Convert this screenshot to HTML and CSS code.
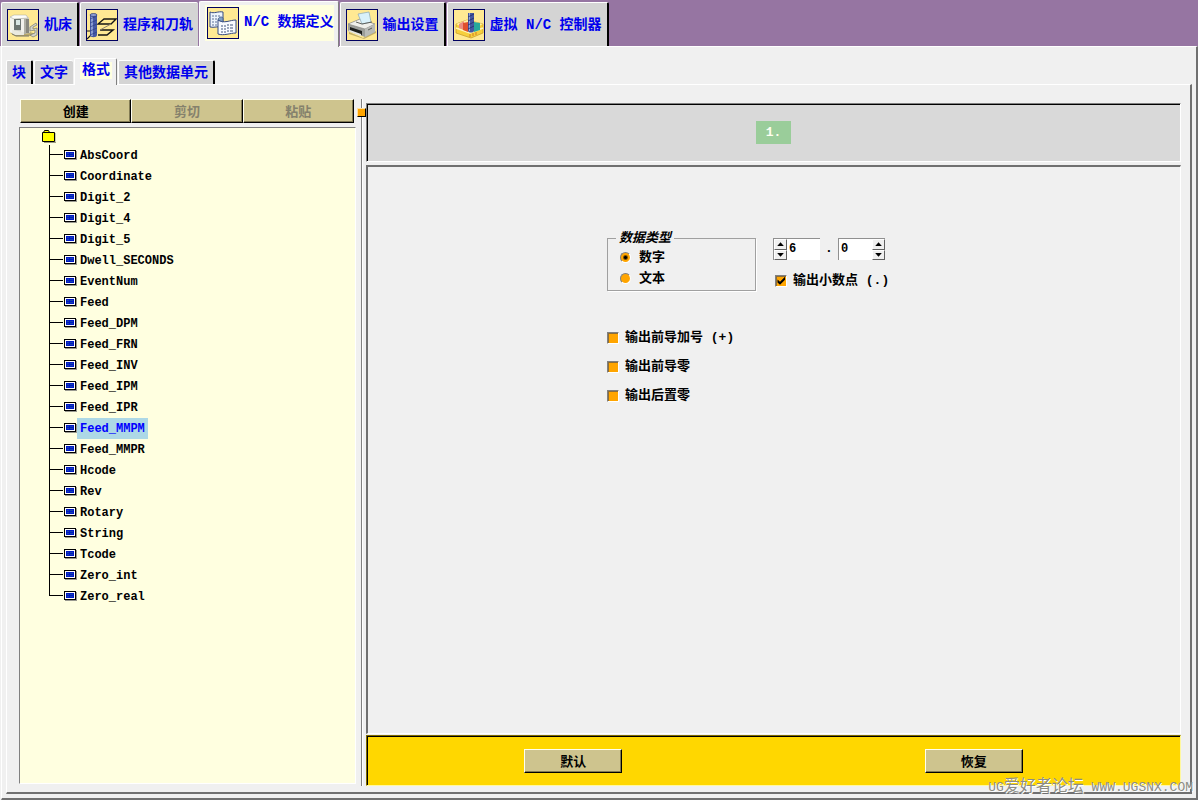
FILE: index.html
```html
<!DOCTYPE html>
<html lang="zh-CN">
<head>
<meta charset="utf-8">
<title>N/C 数据定义</title>
<link rel="stylesheet" href="styles.css">
</head>
<body>
<div class="app">
  <nav class="tabs main-tabs" role="tablist">
    <button class="tab" role="tab">
      <svg class="tab-icon" viewBox="0 0 30 30" aria-hidden="true">
        <path d="M2 23l6 3h14l6-2-6-2z" fill="#b9a96c"/>
        <path d="M2 7l4-2h12l3 3 1 15-15 2-5-3z" fill="#cfcfc6"/>
        <path d="M2 7l4 2v15l-4-2z" fill="#f4f4ee"/>
        <path d="M2 7l4-2h12l2 3-14 1z" fill="#fdfdf8" stroke="#a5a598" stroke-width=".5"/>
        <path d="M6 9h7v11H6z" fill="#6d7572"/>
        <path d="M8 10h4v5H8z" fill="#d9e6e4"/>
        <path d="M13 9h3v15h-3z" fill="#f2f2ec"/>
        <path d="M16 9h2v15h-2z" fill="#b0b0a6"/>
        <path d="M18 9h3v14h-3z" fill="#88887e"/>
        <path d="M4 20l12 2v3H7l-3-2z" fill="#e9e9e0"/>
        <path d="M28 13l-6 4v4l5-1v3l-5 2 3 2 4-2v-7l-4 1v-2l4-2z" fill="#d4d4cc" stroke="#77776c" stroke-width=".7"/>
        <path d="M4 24l4 2h13" fill="none" stroke="#77776c"/>
      </svg>
      <span>机床</span>
    </button>
    <button class="tab before-active" role="tab">
      <svg class="tab-icon" viewBox="0 0 30 30" aria-hidden="true">
        <path d="M0 21h4M5 24l-5 5" stroke="#151515" stroke-width="1.200"/>
        <path d="M17 9h12l-5 5H11z" fill="none" stroke="#151515" stroke-width="1.300"/>
        <path d="M13 20h13l-6 5h-9" fill="none" stroke="#151515" stroke-width="1.500"/>
        <path d="M24 14l-11 6" stroke="#8b8170"/>
        <path d="M3 5v20c0 3 7 3 7 0V5z" fill="#4659a5"/>
        <path d="M5 6v20" stroke="#a3b5e2" stroke-width="1.500"/>
        <path d="M3 9l7-3M3 13l7-3M3 17l7-3M3 21l7-3M3 25l7-3" stroke="#2c3e82" stroke-width=".7"/>
        <ellipse cx="6.500" cy="5" rx="3.500" ry="1.500" fill="#8e9fd6" stroke="#20306f" stroke-width=".7"/>
      </svg>
      <span>程序和刀轨</span>
    </button>
    <button class="tab active" role="tab" aria-selected="true">
      <span class="tab-face">
        <svg class="tab-icon" viewBox="0 0 30 30" aria-hidden="true">
          <path d="M2 4c4 2 8-1 13 0v15c-5-1-9 1-13 0z" fill="#edf4fc" stroke="#354a80"/>
          <path d="M4 8h2m1 0h2m1 0h2M4 11h2m1 0h2M4 14h2m1 0h2M4 17h2m1 0h2" stroke="#5c7098"/>
          <path d="M10 12c6 4 12 0 18 0v13c-6 0-12 3-18 1z" fill="#f8fbff" stroke="#354a80"/>
          <path d="M13 18h2m1 0h2m1-1h2m1 0h3M13 21h2m1 0h2m1-1h2m1 0h3M13 24h2m1 0h2m1-1h2m1 0h3" stroke="#40557c"/>
          <path d="M10 12c0-3 4-4 5-2v4z" fill="#7f9fc4" stroke="#354a80" stroke-width=".7"/>
        </svg>
        <span>N/C 数据定义</span>
      </span>
    </button>
    <button class="tab" role="tab">
      <svg class="tab-icon" viewBox="0 0 30 30" aria-hidden="true">
        <path d="M2 22l14 6 13-7v2l-12 6-15-5z" fill="#c3af68"/>
        <path d="M1 14l12-5 15 5v8l-10 5-17-6z" fill="#9b9d99"/>
        <path d="M1 14l12-5 15 5-10 5z" fill="#efefea" stroke="#7d7d78" stroke-width=".6"/>
        <path d="M11 4l11-2 2 10-9 2z" fill="#d9f1fa" stroke="#8aa7b4" stroke-width=".7"/>
        <path d="M9 12l6 2 10-2" fill="none" stroke="#60635f"/>
        <path d="M3 17l12 4v4L3 21z" fill="#1b1d1c"/>
        <path d="M3 20l11 4v2L1 21z" fill="#e6e7e2"/>
        <path d="M18 19v8l10-5v-8z" fill="#b9bbb7"/>
        <path d="M21 20l4-2" stroke="#5a5c59"/>
      </svg>
      <span>输出设置</span>
    </button>
    <button class="tab" role="tab">
      <svg class="tab-icon" viewBox="0 0 30 30" aria-hidden="true">
        <path d="M2 14l11-4 16 4v9l-12 5-15-5z" fill="#f6cf3c" stroke="#c39824" stroke-width=".7"/>
        <path d="M2 14l11-4 16 4-13 7z" fill="#fff0a0"/>
        <path d="M2 18l14 5 13-5" fill="none" stroke="#fff6bd" stroke-width="1.500"/>
        <path d="M5 14l5-3v9l-5-2z" fill="#eb8d7f"/>
        <path d="M9 13l5-1v10l-5-2z" fill="#e0502c"/>
        <path d="M20 12l6 1v7l-6 2z" fill="#27a99b"/>
        <path d="M14 3h6v18c-1 2-5 2-6 0z" fill="#4556a0"/>
        <path d="M15.500 3v18" stroke="#95a6db"/>
        <path d="M14 7l6-3M14 11l6-3M14 15l6-3M14 19l6-3" stroke="#1e2b6b" stroke-width=".8"/>
        <path d="M16 24v3m3-4v3m3-4v3" stroke="#d37d23"/>
      </svg>
      <span>虚拟 N/C 控制器</span>
    </button>
  </nav>

  <div class="sheet">
    <nav class="tabs sub-tabs" role="tablist">
      <button class="tab" role="tab">块</button>
      <button class="tab before-active" role="tab">文字</button>
      <button class="tab active" role="tab" aria-selected="true"><span class="tab-face">格式</span></button>
      <button class="tab" role="tab">其他数据单元</button>
    </nav>

    <main class="page">
      <section class="browser">
        <div class="toolbar">
          <button class="btn">创建</button>
          <button class="btn" disabled>剪切</button>
          <button class="btn" disabled>粘贴</button>
        </div>
        <div class="tree">
          <svg class="folder" viewBox="0 0 14 13" aria-hidden="true">
            <path d="M2 12.500h12V3" fill="none" stroke="#999980"/>
            <path d="M.5 2.500h1l1-2h4l1 2h5v9H.5z" fill="#ffff00" stroke="#000"/>
            <path d="M1 2.500h11" stroke="#000"/>
          </svg>
          <ul class="nodes">
            <li><svg class="node-icon"><use href="#node"/></svg><span>AbsCoord</span></li>
            <li><svg class="node-icon"><use href="#node"/></svg><span>Coordinate</span></li>
            <li><svg class="node-icon"><use href="#node"/></svg><span>Digit_2</span></li>
            <li><svg class="node-icon"><use href="#node"/></svg><span>Digit_4</span></li>
            <li><svg class="node-icon"><use href="#node"/></svg><span>Digit_5</span></li>
            <li><svg class="node-icon"><use href="#node"/></svg><span>Dwell_SECONDS</span></li>
            <li><svg class="node-icon"><use href="#node"/></svg><span>EventNum</span></li>
            <li><svg class="node-icon"><use href="#node"/></svg><span>Feed</span></li>
            <li><svg class="node-icon"><use href="#node"/></svg><span>Feed_DPM</span></li>
            <li><svg class="node-icon"><use href="#node"/></svg><span>Feed_FRN</span></li>
            <li><svg class="node-icon"><use href="#node"/></svg><span>Feed_INV</span></li>
            <li><svg class="node-icon"><use href="#node"/></svg><span>Feed_IPM</span></li>
            <li><svg class="node-icon"><use href="#node"/></svg><span>Feed_IPR</span></li>
            <li class="selected"><svg class="node-icon"><use href="#node"/></svg><span>Feed_MMPM</span></li>
            <li><svg class="node-icon"><use href="#node"/></svg><span>Feed_MMPR</span></li>
            <li><svg class="node-icon"><use href="#node"/></svg><span>Hcode</span></li>
            <li><svg class="node-icon"><use href="#node"/></svg><span>Rev</span></li>
            <li><svg class="node-icon"><use href="#node"/></svg><span>Rotary</span></li>
            <li><svg class="node-icon"><use href="#node"/></svg><span>String</span></li>
            <li><svg class="node-icon"><use href="#node"/></svg><span>Tcode</span></li>
            <li><svg class="node-icon"><use href="#node"/></svg><span>Zero_int</span></li>
            <li><svg class="node-icon"><use href="#node"/></svg><span>Zero_real</span></li>
          </ul>
        </div>
      </section>

      <div class="splitter"><span class="sash"></span></div>

      <section class="detail">
        <header class="preview"><output class="sample">1.</output></header>

        <form class="editor">
          <div class="form">
            <div class="form-top">
              <fieldset class="types">
                <legend>数据类型</legend>
                <label class="option"><input type="radio" name="type" checked>数字</label>
                <label class="option"><input type="radio" name="type">文本</label>
              </fieldset>
              <div class="digits">
                <div class="spin-row">
                  <div class="spin">
                    <div class="arrows">
                      <button type="button" class="up" aria-label="增加整数位"></button>
                      <button type="button" class="down" aria-label="减少整数位"></button>
                    </div>
                    <input type="text" value="6" aria-label="整数位">
                  </div>
                  <span class="point">.</span>
                  <div class="spin">
                    <input type="text" value="0" aria-label="小数位">
                    <div class="arrows">
                      <button type="button" class="up" aria-label="增加小数位"></button>
                      <button type="button" class="down" aria-label="减少小数位"></button>
                    </div>
                  </div>
                </div>
                <label class="check"><input type="checkbox" checked>输出小数点 (.)</label>
              </div>
            </div>
            <div class="flags">
              <label class="check"><input type="checkbox">输出前导加号 (+)</label>
              <label class="check"><input type="checkbox">输出前导零</label>
              <label class="check"><input type="checkbox">输出后置零</label>
            </div>
          </div>
        </form>

        <footer class="actions">
          <button class="btn">默认</button>
          <button class="btn">恢复</button>
        </footer>
      </section>
    </main>
  </div>
  <div class="watermark"><span class="latin">UG</span>爱好者论坛<span class="latin"> WWW.UGSNX.COM</span></div>
</div>

<svg class="defs" aria-hidden="true">
  <symbol id="node" viewBox="0 0 13 11">
    <g shape-rendering="crispEdges">
      <path d="M1 1h12v9H1z" fill="#999990"/>
      <path d="M0 0h12v9H0z" fill="#000"/>
      <path d="M1 1h10v7H1z" fill="#fff"/>
      <path d="M2 2h8v5H2z" fill="#0018c8"/>
      <path d="M3 3h2v1H3zm3 0h3v1H6zM3 5h2v1H3zm3 0h3v1H6z" fill="#1848a8"/>
    </g>
  </symbol>
</svg>
</body>
</html>
```

FILE: styles.css
```css
* { box-sizing: border-box; }

body {
  margin: 0;
  font: bold 13px/21px "Liberation Mono", "Noto Sans CJK SC", monospace;
  color: #000;
  background: #f0f0f0;
}

button, input, fieldset {
  font: inherit;
  color: inherit;
  margin: 0;
  padding: 0;
}

.defs { display: none; }

.app {
  position: relative;
  display: flex;
  flex-direction: column;
  min-height: 100vh;
}

/* Tabs */
.tabs {
  display: flex;
  align-items: flex-end;
  gap: 1px;
}

.tab {
  display: flex;
  align-items: center;
  gap: 5px;
  padding: 1px 5px 0;
  font-size: 14px;
  color: #0000ee;
  background: #d4d4d4;
  border: 1px solid #fff;
  border-right: 2px solid #000;
  border-bottom: 0;
  border-radius: 2px 2px 0 0;
  white-space: nowrap;
}

.tab.before-active {
  border-right: 0;
}

.tab.active {
  background: #f0f0f0;
  border-right: 1px solid #808080;
}

.tab-face {
  display: flex;
  align-items: center;
  gap: 5px;
  background: #ffffe0;
}

.tab-icon {
  width: 32px;
  height: 32px;
  border: 1px solid #000060;
  background: #ffe993;
}

.main-tabs {
  padding: 1px 0 0 1px;
  background: #9675a2;
}
.main-tabs .tab { height: 44px; }
.main-tabs .tab.active {
  height: 46px;
  padding: 0 4px 4px 5px;
  margin-bottom: -1px;
  position: relative;
}
.main-tabs .tab-face { padding: 2px 0 2px 2px; }

.sub-tabs .tab { height: 24px; }
.sub-tabs .tab.active {
  height: 27px;
  padding: 0 4px 4px 5px;
  margin-bottom: -1px;
  position: relative;
}
.sub-tabs .tab-face { padding: 0 2px; line-height: 17px; }

/* Frames */
.sheet, .page {
  flex: 1;
  display: flex;
  border: 1px solid #fff;
  border-right: 2px solid #707070;
  border-bottom: 2px solid #707070;
}

.sheet {
  flex-direction: column;
  margin-left: 1px;
  padding: 11px 4px 4px 4px;
  background: #f0f0f0;
}

.page { padding: 14px 9px 6px 12px; }

/* Left column */
.browser {
  flex: 0 0 337px;
  display: flex;
  flex-direction: column;
  gap: 4px;
  padding-bottom: 2px;
}

.btn {
  height: 24px;
  padding-top: 2px;
  background: #cec48e;
  border: 1px solid #fffff0;
  border-right-color: #000;
  border-bottom-color: #000;
  box-shadow: inset -1px -1px 0 #827b54;
}

.btn:disabled { color: #85816c; }

.toolbar {
  display: grid;
  grid-template-columns: repeat(3, 1fr);
  padding: 0 2px 0 1px;
}

.tree {
  flex: 1;
  background: #ffffe0;
  border: 1px solid #fff;
  border-top-color: #808080;
  border-left-color: #808080;
  padding-top: 2px;
}

.folder {
  display: block;
  width: 14px;
  height: 13px;
  margin: 0 0 2px 22px;
}

.nodes {
  list-style: none;
  margin: 0 0 0 29px;
  padding: 0;
  font-size: 12px;
}

.nodes li {
  display: flex;
  align-items: center;
  height: 21px;
  padding-left: 15px;
  background:
    linear-gradient(#000, #000) 0 0 / 1px 100% no-repeat,
    linear-gradient(#000, #000) 0 9px / 14px 1px no-repeat;
}

.nodes li:last-child {
  background-size: 1px 10px, 14px 1px;
}

.nodes span {
  padding: 2px 3px 0;
  line-height: 19px;
}

.selected span {
  color: #0000ff;
  background: #add8e6;
}

.node-icon {
  width: 13px;
  height: 11px;
}

/* Splitter */
.splitter {
  flex: 0 0 10px;
  background:
    linear-gradient(#808080, #808080) 5px 0 / 1px 100% no-repeat,
    linear-gradient(#fff, #fff) 6px 0 / 1px 100% no-repeat;
}

.sash {
  display: block;
  width: 9px;
  height: 9px;
  margin: 9px 0 0 1px;
  background: #ffa500;
  border: 1px solid #ffe0a0;
  border-right-color: #000;
  border-bottom-color: #000;
}

/* Right column */
.detail {
  flex: 1;
  display: flex;
  flex-direction: column;
  padding-top: 4px;
  min-width: 0;
}

.preview {
  display: flex;
  align-items: center;
  justify-content: center;
  height: 59px;
  margin-bottom: 3px;
  background: #d9d9d9;
  border: 1px solid #fff;
  border-top-color: #808080;
  border-left-color: #808080;
  box-shadow: inset 1px 1px 0 #000;
}

.sample {
  padding: 1px 10px;
  color: #fffff0;
  background: #9acd9a;
}

.editor {
  flex: 1;
  border: 1px solid #fff;
  border-top: 2px solid #707070;
  border-left: 2px solid #707070;
  padding: 63px 16px 16px;
}

.form {
  width: 334px;
  margin: 0 auto;
}

.form-top {
  display: flex;
  gap: 17px;
}

.types {
  width: 149px;
  padding: 1px 0 1px 11px;
  border: 1px solid #a0a0a0;
  box-shadow: 1px 1px 0 #fff;
}

.types legend {
  padding: 2px 3px 0;
  margin-left: -3px;
  line-height: 14px;
  font-style: italic;
}

.option, .check {
  display: flex;
  align-items: center;
}

.option input {
  appearance: none;
  width: 11px;
  height: 11px;
  margin: 0 8px 0 1px;
  border: 1px solid #fff;
  border-top-color: #808080;
  border-left-color: #808080;
  border-radius: 50%;
  background: #ffa500;
}

.option input:checked {
  background: radial-gradient(#000 1px, #ffa500 3px);
}

.check input {
  appearance: none;
  display: grid;
  width: 12px;
  height: 12px;
  margin: 0 6px 0 0;
  background: #ffa500;
  border: 1px solid #fff;
  border-top-color: #808080;
  border-left-color: #808080;
  box-shadow: inset 1px 1px 0 #8a6d3b;
}

.check input:checked::after {
  content: "";
  background: #000;
  clip-path: polygon(15% 40%, 40% 62%, 90% 12%, 90% 42%, 40% 92%, 15% 70%);
}

.digits { padding-top: 8px; }

.spin-row {
  display: flex;
  margin-bottom: 10px;
}

.spin {
  display: flex;
  width: 47px;
  height: 22px;
  background: #fff;
  border-top: 1px solid #909090;
  border-left: 1px solid #909090;
}

.spin input {
  flex: 1;
  min-width: 0;
  padding: 0 2px;
  border: 0;
  background: transparent;
  font-size: 12px;
}

.point {
  width: 18px;
  text-align: center;
}

.arrows {
  flex: 0 0 13px;
  display: grid;
  grid-template-rows: 1fr 1fr;
}

.arrows button {
  display: grid;
  place-items: center;
  background: #f0f0f0;
  border: 1px solid #fff;
  border-right-color: #606060;
  border-bottom-color: #606060;
}

.arrows button::after {
  content: "";
  width: 7px;
  height: 4px;
  background: #000;
}

.up::after { clip-path: polygon(50% 0, 100% 100%, 0 100%); }
.down::after { clip-path: polygon(0 0, 100% 0, 50% 100%); }

.flags { padding-top: 32px; }
.flags .check { height: 29px; }

.digits .check { padding-left: 2px; }

/* Footer */
.actions {
  display: flex;
  align-items: center;
  justify-content: space-around;
  height: 51px;
  margin-top: 1px;
  padding: 0 6px;
  background: #ffd700;
  border: 1px solid #fff8a0;
  border-top-color: #806c00;
  border-left-color: #806c00;
  box-shadow: inset 1px 1px 0 #000;
}

.actions .btn { width: 98px; }

.watermark {
  position: absolute;
  right: 5px;
  bottom: 2px;
  font-size: 16px;
  font-weight: normal;
  color: #8c8c84;
  text-shadow: 1px 1px 0 #fff;
  white-space: pre;
}

.watermark .latin { font-size: 13px; }
```
